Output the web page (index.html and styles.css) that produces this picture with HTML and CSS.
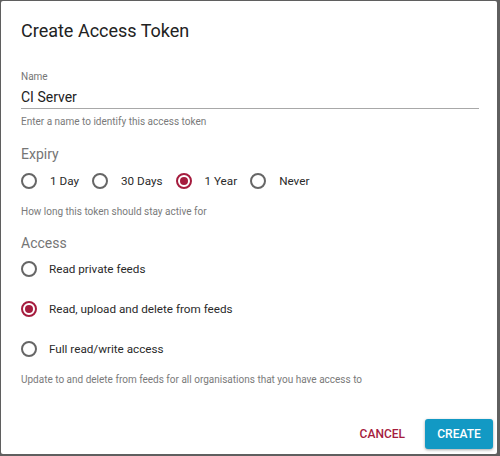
FILE: index.html
```html
<!DOCTYPE html>
<html>
<head>
<meta charset="utf-8">
<link rel="stylesheet" href="styles.css">
</head>
<body>
<div class="dialog">
  <h1 class="title">Create Access Token</h1>

  <div class="field">
    <div class="field-label">Name</div>
    <div class="field-input">CI Server</div>
    <div class="helper helper-name">Enter a name to identify this access token</div>
  </div>

  <div class="section-label expiry-label">Expiry</div>
  <div class="radio-row">
    <div class="radio-item"><span class="radio"></span><span class="radio-text">1 Day</span></div>
    <div class="radio-item"><span class="radio"></span><span class="radio-text">30 Days</span></div>
    <div class="radio-item"><span class="radio checked"></span><span class="radio-text">1 Year</span></div>
    <div class="radio-item"><span class="radio"></span><span class="radio-text">Never</span></div>
  </div>
  <div class="helper helper-expiry">How long this token should stay active for</div>

  <div class="section-label access-label">Access</div>
  <div class="radio-col">
    <div class="radio-item"><span class="radio"></span><span class="radio-text">Read private feeds</span></div>
    <div class="radio-item"><span class="radio checked"></span><span class="radio-text">Read, upload and delete from feeds</span></div>
    <div class="radio-item"><span class="radio"></span><span class="radio-text">Full read/write access</span></div>
  </div>
  <div class="helper helper-access">Update to and delete from feeds for all organisations that you have access to</div>

  <div class="actions">
    <button class="btn btn-flat">CANCEL</button>
    <button class="btn btn-raised">CREATE</button>
  </div>
</div>
</body>
</html>
```

FILE: styles.css
```css
html, body {
  margin: 0;
  padding: 0;
}
body {
  background: #5f5f5f;
  width: 500px;
  height: 456px;
  overflow: hidden;
  font-family: Roboto, "Noto Sans", sans-serif;
}
.dialog {
  box-sizing: border-box;
  margin: 1px 3px 2px 1px;
  height: 453px;
  background: #ffffff;
  border-radius: 2px;
  padding: 18px 0 5px 20px;
  display: flex;
  flex-direction: column;
}
.title {
  margin: 0;
  font-size: 18px;
  font-weight: 400;
  line-height: 24px;
  color: #222222;
}
.field {
  margin-top: 27px;
  margin-right: 18px;
}
.field-label {
  font-size: 10px;
  line-height: 14px;
  color: #757575;
}
.field-input {
  font-size: 14px;
  line-height: 20px;
  color: #222222;
  padding: 3px 0 1px;
  border-bottom: 1px solid #a8a8a8;
}
.helper {
  font-size: 10px;
  line-height: 14px;
  color: #7a7a7a;
}
.helper-name {
  margin-top: 6px;
}
.section-label {
  font-size: 14px;
  line-height: 20px;
  color: #757575;
}
.expiry-label {
  margin-top: 15px;
}
.radio-row {
  margin-top: 7px;
  display: flex;
  gap: 13px;
}
.radio-item {
  display: flex;
  align-items: center;
  height: 20px;
  gap: 13px;
}
.radio {
  box-sizing: border-box;
  width: 16px;
  height: 16px;
  border: 2px solid #666666;
  border-radius: 50%;
  display: flex;
  align-items: center;
  justify-content: center;
}
.radio.checked {
  border-color: #a51c3e;
}
.radio.checked::after {
  content: "";
  width: 8px;
  height: 8px;
  border-radius: 50%;
  background: #a51c3e;
}
.radio-text {
  font-size: 11.7px;
  color: #2a2a2a;
}
.helper-expiry {
  margin-top: 14px;
}
.access-label {
  margin-top: 14px;
}
.radio-col {
  margin-top: 6px;
  display: flex;
  flex-direction: column;
  gap: 20px;
}
.radio-col .radio-item {
  gap: 12px;
}
.helper-access {
  margin-top: 14px;
}
.actions {
  margin-top: auto;
  display: flex;
  justify-content: flex-end;
  gap: 10px;
  padding-right: 4px;
}
.btn {
  font-family: Roboto, "Noto Sans", sans-serif;
  font-size: 12px;
  font-weight: 500;
  height: 30px;
  border: none;
  border-radius: 3px;
  cursor: pointer;
}
.btn-flat {
  background: transparent;
  color: #a51c3e;
  padding: 0 10px;
}
.btn-raised {
  background: #1299c4;
  color: #ffffff;
  width: 68px;
  padding: 0;
  box-shadow: 0 1px 3px rgba(0, 0, 0, 0.35);
}
```
